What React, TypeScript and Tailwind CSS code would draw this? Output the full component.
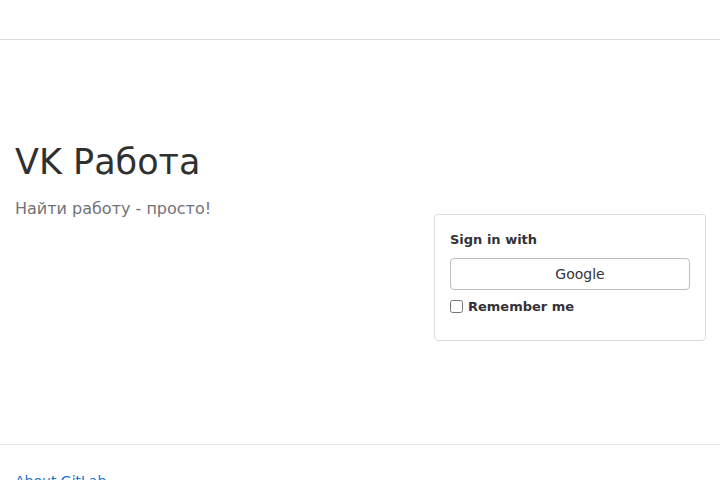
export default function App() {
  return (
    <div className="min-h-[480px] bg-white text-[#333238]" style={{ fontFamily: '"DejaVu Sans", sans-serif' }}>
      <header className="h-10 border-b border-[#dcdcde]" />
      <main className="flex px-[15px] pt-[101px] h-[404px]">
        <div className="flex-1">
          <h1 className="text-[35px] leading-[42px] font-normal text-[#303030]">VK Работа</h1>
          <p className="mt-[14px] text-[16px] leading-6 text-[#737278]">Найти работу - просто!</p>
        </div>
        <div className="w-[272px] mt-[73px] mr-[-1px] self-start">
          <div className="border border-[#dcdcde] rounded-[4px] px-[15px] pt-[15px] pb-[23px]">
            <div className="text-[13px] font-bold leading-5 mb-[8px]">Sign in with</div>
            <button className="w-full h-[32px] pl-[20px] border border-[#bfbfc3] rounded-[4px] bg-white text-[14px] text-[#333238]">
              Google
            </button>
            <label className="flex items-center gap-[5px] mt-[7px] text-[13px] font-bold">
              <input type="checkbox" className="w-[13px] h-[13px] m-0" />
              Remember me
            </label>
          </div>
        </div>
      </main>
      <footer className="border-t border-[#e9e9eb] px-[15px] pt-[24px]">
        <a href="#" className="text-[14px] text-[#1f75cb]">About GitLab</a>
      </footer>
    </div>
  );
}
